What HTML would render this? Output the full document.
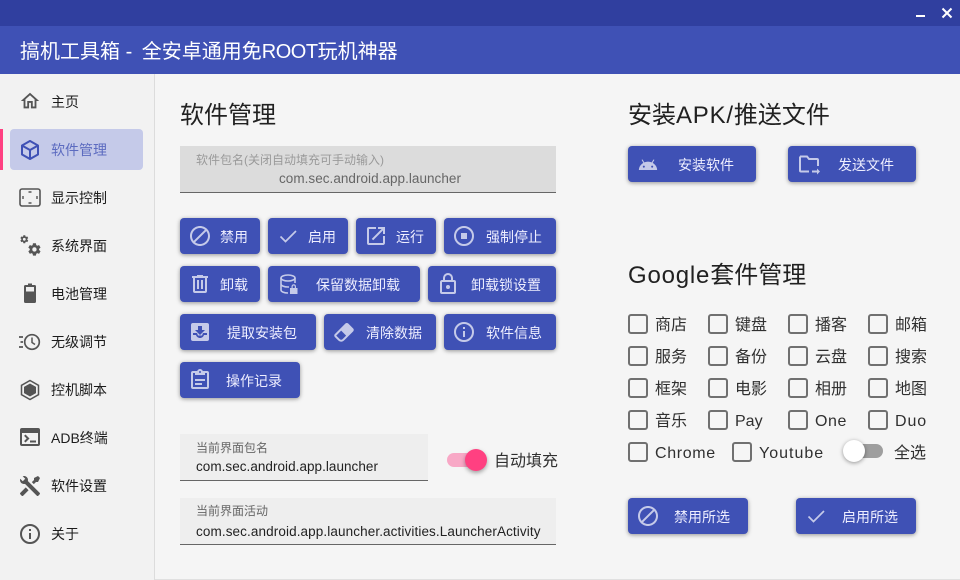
<!DOCTYPE html>
<html><head><meta charset="utf-8">
<style>
html,body{margin:0;padding:0}
body{width:960px;height:580px;overflow:hidden;position:relative;background:#f5f5f5;font-family:"Liberation Sans","Noto Sans CJK SC",sans-serif;color:#212121}
div,span,svg{position:absolute}
.t{white-space:nowrap;line-height:20px;height:20px}
.t span,.h span{position:static}
.n{left:51px;font-size:14px;color:#1c1c1c}
.i{left:18px;fill:#555}
.b{background:#3f51b5;border-radius:4px;height:36px;box-shadow:0 1px 4px rgba(0,0,0,.4)}
.b span{white-space:nowrap;color:#eef;font-size:14px;line-height:20px;top:9px}
.b svg{fill:#c5cae9;top:6px;width:24px;height:24px}
.h{font-size:24px;line-height:32px;color:#212121;white-space:nowrap}
.c{width:16px;height:16px;border:2px solid #707070;border-radius:3px}
.l{font-size:16px;color:#303030;line-height:20px;white-space:nowrap}
</style></head><body>
<div style="left:0;top:0;width:960px;height:26px;background:#303f9f"></div>
<div style="left:916px;top:15px;width:9px;height:2px;background:#fff"></div>
<svg style="left:941px;top:7px" width="12" height="12" viewBox="0 0 12 12"><path d="M1.500 1.500l9 9M10.500 1.500l-9 9" stroke="#fff" stroke-width="2" fill="none"/></svg>
<div style="left:0;top:26px;width:960px;height:48px;background:#3f51b5"></div>
<div class="t" style="left:20px;top:40px;font-size:20px;color:#fff;height:24px;line-height:24px">搞机工具箱 <span style="letter-spacing:4px">-</span> 全安卓通用免<span style="letter-spacing:-.5px">ROOT</span>玩机神器</div>

<div style="left:0;top:74px;width:154px;height:506px;background:#f2f2f2"></div>
<div style="left:154px;top:74px;width:1px;height:506px;background:#dcdcdc"></div>
<div style="left:155px;top:579px;width:805px;height:1px;background:#e0e0e0"></div>
<div style="left:0;top:129px;width:3px;height:41px;background:#ff4081"></div>
<div style="left:10px;top:129px;width:133px;height:41px;background:#c5cae9;border-radius:4px"></div>

<svg class="i" style="left:19px;top:90px" width="22" height="22" viewBox="0 0 24 24"><path d="M12 5.690l5 4.500V18h-2v-6H9v6H7v-7.810l5-4.500M12 3L2 12h3v8h6v-6h2v6h6v-8h3L12 3z"/></svg>
<div class="t n" style="top:92px">主页</div>

<svg class="i" style="top:138px;fill:#3f51b5" width="24" height="24" viewBox="0 0 24 24"><path d="M21,16.500C21,16.880 20.790,17.210 20.470,17.380L12.570,21.820C12.410,21.940 12.210,22 12,22C11.790,22 11.590,21.940 11.430,21.820L3.530,17.380C3.210,17.210 3,16.880 3,16.500V7.500C3,7.120 3.210,6.790 3.530,6.620L11.430,2.180C11.590,2.060 11.790,2 12,2C12.210,2 12.410,2.060 12.570,2.180L20.470,6.620C20.790,6.790 21,7.120 21,7.500V16.500M12,4.150L6.040,7.500L12,10.850L17.960,7.500L12,4.150M5,15.910L11,19.290V12.580L5,9.210V15.910M19,15.910V9.210L13,12.580V19.290L19,15.910Z"/></svg>
<div class="t n" style="top:140px;color:#5c6bc0">软件管理</div>

<svg style="left:19px;top:188px" width="22" height="19" viewBox="0 0 22 19"><rect x="1" y="1" width="20" height="17" rx="2" fill="none" stroke="#555" stroke-width="1.600"/><path d="M9.500 4h3M9.500 15h3M4 8v3M18 8v3" stroke="#555" stroke-width="1.400" fill="none"/></svg>
<div class="t n" style="top:188px">显示控制</div>

<svg style="left:20px;top:235px" width="22" height="22" viewBox="0 0 22 22" fill="#555"><path transform="translate(7 7) scale(.62)" d="M12,15.500A3.500,3.500 0 0,1 8.500,12A3.500,3.500 0 0,1 12,8.500A3.500,3.500 0 0,1 15.500,12A3.500,3.500 0 0,1 12,15.500M19.430,12.970C19.470,12.650 19.500,12.330 19.500,12C19.500,11.670 19.470,11.340 19.430,11L21.540,9.370C21.730,9.220 21.780,8.950 21.660,8.730L19.660,5.270C19.540,5.050 19.270,4.960 19.050,5.050L16.560,6.050C16.040,5.660 15.500,5.320 14.870,5.070L14.500,2.420C14.460,2.180 14.250,2 14,2H10C9.750,2 9.540,2.180 9.500,2.420L9.130,5.070C8.500,5.320 7.960,5.660 7.440,6.050L4.950,5.050C4.730,4.960 4.460,5.050 4.340,5.270L2.340,8.730C2.210,8.950 2.270,9.220 2.460,9.370L4.570,11C4.530,11.340 4.500,11.670 4.500,12C4.500,12.330 4.530,12.650 4.570,12.970L2.460,14.630C2.270,14.780 2.210,15.050 2.340,15.270L4.340,18.730C4.460,18.950 4.730,19.030 4.950,18.950L7.440,17.940C7.960,18.340 8.500,18.680 9.130,18.930L9.500,21.580C9.540,21.820 9.750,22 10,22H14C14.250,22 14.460,21.820 14.500,21.580L14.870,18.930C15.500,18.670 16.040,18.340 16.560,17.940L19.050,18.950C19.270,19.030 19.540,18.950 19.660,18.730L21.660,15.270C21.780,15.050 21.730,14.780 21.540,14.630L19.430,12.970Z"/><path transform="translate(-.5 -.5) scale(.4)" d="M12,15.500A3.500,3.500 0 0,1 8.500,12A3.500,3.500 0 0,1 12,8.500A3.500,3.500 0 0,1 15.500,12A3.500,3.500 0 0,1 12,15.500M19.430,12.970C19.470,12.650 19.500,12.330 19.500,12C19.500,11.670 19.470,11.340 19.430,11L21.540,9.370C21.730,9.220 21.780,8.950 21.660,8.730L19.660,5.270C19.540,5.050 19.270,4.960 19.050,5.050L16.560,6.050C16.040,5.660 15.500,5.320 14.870,5.070L14.500,2.420C14.460,2.180 14.250,2 14,2H10C9.750,2 9.540,2.180 9.500,2.420L9.130,5.070C8.500,5.320 7.960,5.660 7.440,6.050L4.950,5.050C4.730,4.960 4.460,5.050 4.340,5.270L2.340,8.730C2.210,8.950 2.270,9.220 2.460,9.370L4.570,11C4.530,11.340 4.500,11.670 4.500,12C4.500,12.330 4.530,12.650 4.570,12.970L2.460,14.630C2.270,14.780 2.210,15.050 2.340,15.270L4.340,18.730C4.460,18.950 4.730,19.030 4.950,18.950L7.440,17.940C7.960,18.340 8.500,18.680 9.130,18.930L9.500,21.580C9.540,21.820 9.750,22 10,22H14C14.250,22 14.460,21.820 14.500,21.580L14.870,18.930C15.500,18.670 16.040,18.340 16.560,17.940L19.050,18.950C19.270,19.030 19.540,18.950 19.660,18.730L21.660,15.270C21.780,15.050 21.730,14.780 21.540,14.630L19.430,12.970Z"/></svg>
<div class="t n" style="top:236px">系统界面</div>

<svg style="left:24px;top:283px" width="12" height="20" viewBox="0 0 12 20"><path d="M4 .5h4V2h2.500A1.500 1.500 0 0 1 12 3.500v15a1.500 1.500 0 0 1-1.500 1.500h-9A1.500 1.500 0 0 1 0 18.500v-15A1.500 1.500 0 0 1 1.500 2H4z" fill="#555"/><rect x="2" y="4" width="8" height="4.500" fill="#eee"/></svg>
<div class="t n" style="top:284px">电池管理</div>

<svg style="left:19px;top:332px" width="22" height="20" viewBox="0 0 22 20"><circle cx="13" cy="10" r="7.300" fill="none" stroke="#555" stroke-width="1.700"/><path d="M13 5.500V10.500l3 2" fill="none" stroke="#555" stroke-width="1.500"/><path d="M0 5h4M1.500 10h2.500M0 15h4" stroke="#555" stroke-width="1.700"/></svg>
<div class="t n" style="top:332px">无级调节</div>

<svg class="i" style="top:378px" width="24" height="24" viewBox="0 0 24 24"><path d="M12 2.500l8.500 4.800v9.400L12 21.500l-8.500-4.800V7.300z" fill="none" stroke="#555" stroke-width="1.500"/><path d="M12 5.500l6 3.400v6.200l-6 3.400-6-3.400V8.900z"/></svg>
<div class="t n" style="top:380px">控机脚本</div>

<svg class="i" style="top:425px;left:18px" width="24" height="24" viewBox="0 0 24 24"><path d="M20 3H4a2 2 0 0 0-2 2v14a2 2 0 0 0 2 2h16a2 2 0 0 0 2-2V5a2 2 0 0 0-2-2zm0 16H4V8h16v11zm-2-1.500h-6v-2h6v2zM7.500 17.500l-1.410-1.410L8.670 13.500l-2.590-2.590L7.500 9.500l4 4-4 4z"/></svg>
<div class="t n" style="top:428px">ADB终端</div>

<svg class="i" style="top:474px" width="24" height="24" viewBox="0 0 24 24"><path d="M21.710 20.290l-1.420 1.420a1 1 0 0 1-1.410 0L7 9.850A3.810 3.810 0 0 1 6 10a4 4 0 0 1-3.780-5.300l2.540 2.540.53-.53 1.420-1.420.53-.53L4.700 2.220A4 4 0 0 1 10 6a3.810 3.810 0 0 1-.15 1l11.860 11.880a1 1 0 0 1 0 1.410zM2.290 18.880a1 1 0 0 0 0 1.410l1.420 1.420a1 1 0 0 0 1.410 0l5.470-5.460-2.830-2.830M20 2l-4 2v2l-2.170 2.170 2 2L18 8h2l2-4z"/></svg>
<div class="t n" style="top:476px">软件设置</div>

<svg class="i" style="top:522px" width="24" height="24" viewBox="0 0 24 24"><circle cx="12" cy="12" r="9" fill="none" stroke="#555" stroke-width="2"/><path d="M11 7h2v2h-2zM11 11h2v6h-2z"/></svg>
<div class="t n" style="top:524px">关于</div>

<div class="h" style="left:180px;top:100px">软件管理</div>
<div style="left:180px;top:146px;width:376px;height:46px;background:#dcdcdc;border-bottom:1px solid #666"></div>
<div class="t" style="left:196px;top:150px;font-size:12px;color:#9a9a9a">软件包名(关闭自动填充可手动输入)</div>
<div class="t" style="left:279px;top:169px;font-size:13.500px;color:#666;letter-spacing:.04px">com.sec.android.app.launcher</div>

<div class="b" style="left:180px;top:218px;width:80px"><svg style="left:8px" viewBox="0 0 24 24"><path d="M12 2C6.480 2 2 6.480 2 12s4.480 10 10 10 10-4.480 10-10S17.520 2 12 2zM4 12c0-4.420 3.580-8 8-8 1.850 0 3.550.63 4.900 1.690L5.690 16.900C4.630 15.550 4 13.850 4 12zm8 8c-1.850 0-3.550-.63-4.900-1.690L18.310 7.100C19.370 8.450 20 10.150 20 12c0 4.420-3.580 8-8 8z"/></svg><span style="left:40px">禁用</span></div>
<div class="b" style="left:268px;top:218px;width:80px"><svg style="left:8px" viewBox="0 0 24 24"><path d="M4.500 12.500L9.500 17.500 20 7" fill="none" stroke="#c5cae9" stroke-width="1.700"/></svg><span style="left:40px">启用</span></div>
<div class="b" style="left:356px;top:218px;width:80px"><svg style="left:8px" viewBox="0 0 24 24"><path d="M19 19H5V5h7V3H5a2 2 0 0 0-2 2v14a2 2 0 0 0 2 2h14c1.100 0 2-.9 2-2v-7h-2v7zM14 3v2h3.590l-9.830 9.830 1.410 1.410L19 6.410V10h2V3h-7z"/></svg><span style="left:40px">运行</span></div>
<div class="b" style="left:444px;top:218px;width:112px"><svg style="left:8px" viewBox="0 0 24 24"><circle cx="12" cy="12" r="9" fill="none" stroke="#c5cae9" stroke-width="2"/><rect x="9" y="9" width="6" height="6"/></svg><span style="left:42px">强制停止</span></div>

<div class="b" style="left:180px;top:266px;width:80px"><svg style="left:8px" viewBox="0 0 24 24"><path d="M9 3v1H4v2h1v13a2 2 0 0 0 2 2h10a2 2 0 0 0 2-2V6h1V4h-5V3H9M7 6h10v13H7V6m2 2v9h2V8H9m4 0v9h2V8h-2z"/></svg><span style="left:40px">卸载</span></div>
<div class="b" style="left:268px;top:266px;width:152px"><svg style="left:9px" viewBox="0 0 24 24"><g fill="none" stroke="#c5cae9" stroke-width="1.600"><ellipse cx="11" cy="6" rx="7" ry="3"/><path d="M4 6v12c0 1.700 3 3 7 3M4 12c0 1.700 3 3 7 3h1M18 6v5"/></g><path d="M13 16h7.500v6H13zM14.500 16v-1.500a2.250 2.250 0 0 1 4.500 0V16h-1.200v-1.500a1.050 1.050 0 0 0-2.100 0V16z"/></svg><span style="left:48px">保留数据卸载</span></div>
<div class="b" style="left:428px;top:266px;width:128px"><svg style="left:8px" viewBox="0 0 24 24"><path d="M12 17a2 2 0 0 0 2-2 2 2 0 0 0-2-2 2 2 0 0 0-2 2 2 2 0 0 0 2 2m6 3V10H6v10h12m0-12a2 2 0 0 1 2 2v10a2 2 0 0 1-2 2H6a2 2 0 0 1-2-2V10c0-1.110.89-2 2-2h1V6a5 5 0 0 1 5-5 5 5 0 0 1 5 5v2h1m-6-5a3 3 0 0 0-3 3v2h6V6a3 3 0 0 0-3-3z"/></svg><span style="left:43px">卸载锁设置</span></div>

<div class="b" style="left:180px;top:314px;width:136px"><svg style="left:8px" viewBox="0 0 24 24"><path d="M19 3H5a2 2 0 0 0-2 2v14a2 2 0 0 0 2 2h14a2 2 0 0 0 2-2V5a2 2 0 0 0-2-2z"/><path d="M10 6h4v4h3l-5 5-5-5h3zM5 15h3c.5 1.700 2.100 3 4 3s3.500-1.300 4-3h3v-2h-4l-1 2.500h-4L9 13H5z" fill="#3f51b5"/></svg><span style="left:47px">提取安装包</span></div>
<div class="b" style="left:324px;top:314px;width:112px"><svg style="left:8px" viewBox="0 0 24 24"><path d="M16.240 3.560l4.950 4.940c.78.79.78 2.050 0 2.840L12 20.530a4.008 4.008 0 0 1-5.660 0L2.810 17c-.78-.79-.78-2.050 0-2.840l10.600-10.600c.79-.78 2.050-.78 2.830 0M4.220 15.580l3.540 3.530c.78.79 2.040.79 2.830 0l3.530-3.530-4.950-4.950-4.950 4.950z"/></svg><span style="left:42px">清除数据</span></div>
<div class="b" style="left:444px;top:314px;width:112px"><svg style="left:8px" viewBox="0 0 24 24"><circle cx="12" cy="12" r="9" fill="none" stroke="#c5cae9" stroke-width="2"/><path d="M11 7h2v2h-2zM11 11h2v6h-2z"/></svg><span style="left:42px">软件信息</span></div>

<div class="b" style="left:180px;top:362px;width:120px"><svg style="left:8px" viewBox="0 0 24 24"><path d="M19 3h-4.180C14.400 1.840 13.300 1 12 1s-2.400.84-2.820 2H5a2 2 0 0 0-2 2v14a2 2 0 0 0 2 2h14a2 2 0 0 0 2-2V5a2 2 0 0 0-2-2m-7 0a1 1 0 1 1 0 2 1 1 0 0 1 0-2M7 7h10V5h2v14H5V5h2v2m0 4h10v2H7zm0 4h7v2H7z"/></svg><span style="left:46px">操作记录</span></div>

<div style="left:180px;top:434px;width:248px;height:46px;background:#eee;border-bottom:1px solid #666"></div>
<div class="t" style="left:196px;top:438px;font-size:12px;color:#666">当前界面包名</div>
<div class="t" style="left:196px;top:457px;font-size:13.500px;color:#222;letter-spacing:.04px">com.sec.android.app.launcher</div>
<div style="left:447px;top:453px;width:30px;height:14px;border-radius:7px;background:#f8a8c6"></div>
<div style="left:465px;top:449px;width:22px;height:22px;border-radius:50%;background:#ff4081;box-shadow:0 2px 4px rgba(0,0,0,.35)"></div>
<div class="l" style="left:494px;top:452px">自动填充</div>

<div style="left:180px;top:498px;width:376px;height:46px;background:#eee;border-bottom:1px solid #666"></div>
<div class="t" style="left:196px;top:501px;font-size:12px;color:#666">当前界面活动</div>
<div class="t" style="left:196px;top:522px;font-size:13.500px;color:#222;letter-spacing:.11px">com.sec.android.app.launcher.activities.LauncherActivity</div>

<div class="h" style="left:628px;top:100px">安装<span style="position:static;letter-spacing:.8px">APK/</span>推送文件</div>
<div class="b" style="left:628px;top:146px;width:128px"><svg style="left:10px;top:9px;width:20px;height:20px" viewBox="0 0 24 24"><path d="M17.600 9.480l1.840-3.180c.16-.31.04-.69-.26-.85a.637.637 0 0 0-.83.22l-1.880 3.240a11.463 11.463 0 0 0-8.940 0L5.650 5.670a.643.643 0 0 0-.87-.2c-.28.18-.37.54-.22.83L6.400 9.480A10.780 10.780 0 0 0 1 18h22a10.780 10.780 0 0 0-5.400-8.520M7 15.250a1.250 1.250 0 1 1 0-2.500 1.250 1.250 0 0 1 0 2.500m10 0a1.250 1.250 0 1 1 0-2.500 1.250 1.250 0 0 1 0 2.500z"/></svg><span style="left:50px">安装软件</span></div>
<div class="b" style="left:788px;top:146px;width:128px"><svg style="left:9px" viewBox="0 0 24 24"><path d="M3 4.500h7l2 2.500h8a1 1 0 0 1 1 1v6M12 19.500H4a1 1 0 0 1-1-1v-14" fill="none" stroke="#c5cae9" stroke-width="2"/><path d="M15 18.500h5v-2l3 3-3 3v-2h-5z"/></svg><span style="left:50px">发送文件</span></div>

<div class="h" style="left:628px;top:260px"><span style="position:static;letter-spacing:.8px">Google</span>套件管理</div>

<div class="c" style="left:628px;top:314px"></div><div class="l" style="left:655px;top:316px">商店</div>
<div class="c" style="left:708px;top:314px"></div><div class="l" style="left:735px;top:316px">键盘</div>
<div class="c" style="left:788px;top:314px"></div><div class="l" style="left:815px;top:316px">播客</div>
<div class="c" style="left:868px;top:314px"></div><div class="l" style="left:895px;top:316px">邮箱</div>
<div class="c" style="left:628px;top:346px"></div><div class="l" style="left:655px;top:348px">服务</div>
<div class="c" style="left:708px;top:346px"></div><div class="l" style="left:735px;top:348px">备份</div>
<div class="c" style="left:788px;top:346px"></div><div class="l" style="left:815px;top:348px">云盘</div>
<div class="c" style="left:868px;top:346px"></div><div class="l" style="left:895px;top:348px">搜索</div>
<div class="c" style="left:628px;top:378px"></div><div class="l" style="left:655px;top:380px">框架</div>
<div class="c" style="left:708px;top:378px"></div><div class="l" style="left:735px;top:380px">电影</div>
<div class="c" style="left:788px;top:378px"></div><div class="l" style="left:815px;top:380px">相册</div>
<div class="c" style="left:868px;top:378px"></div><div class="l" style="left:895px;top:380px">地图</div>
<div class="c" style="left:628px;top:410px"></div><div class="l" style="left:655px;top:412px">音乐</div>
<div class="c" style="left:708px;top:410px"></div><div class="l" style="left:735px;top:412px">Pay</div>
<div class="c" style="left:788px;top:410px"></div><div class="l" style="left:815px;top:412px;letter-spacing:.6px">One</div>
<div class="c" style="left:868px;top:410px"></div><div class="l" style="left:895px;top:412px;letter-spacing:.9px">Duo</div>
<div class="c" style="left:628px;top:442px"></div><div class="l" style="left:655px;top:444px;letter-spacing:.65px">Chrome</div>
<div class="c" style="left:732px;top:442px"></div><div class="l" style="left:759px;top:444px;letter-spacing:1px">Youtube</div>
<div style="left:853px;top:444px;width:30px;height:14px;border-radius:7px;background:#9e9e9e"></div>
<div style="left:843px;top:440px;width:22px;height:22px;border-radius:50%;background:#fff;box-shadow:0 1px 4px rgba(0,0,0,.4)"></div>
<div class="l" style="left:894px;top:444px">全选</div>

<div class="b" style="left:628px;top:498px;width:120px"><svg style="left:8px" viewBox="0 0 24 24"><path d="M12 2C6.480 2 2 6.480 2 12s4.480 10 10 10 10-4.480 10-10S17.520 2 12 2zM4 12c0-4.420 3.580-8 8-8 1.850 0 3.550.63 4.900 1.690L5.690 16.900C4.630 15.550 4 13.850 4 12zm8 8c-1.850 0-3.550-.63-4.900-1.690L18.310 7.100C19.370 8.450 20 10.150 20 12c0 4.420-3.580 8-8 8z"/></svg><span style="left:46px">禁用所选</span></div>
<div class="b" style="left:796px;top:498px;width:120px"><svg style="left:8px" viewBox="0 0 24 24"><path d="M4.500 12.500L9.500 17.500 20 7" fill="none" stroke="#c5cae9" stroke-width="1.700"/></svg><span style="left:46px">启用所选</span></div>
</body></html>
